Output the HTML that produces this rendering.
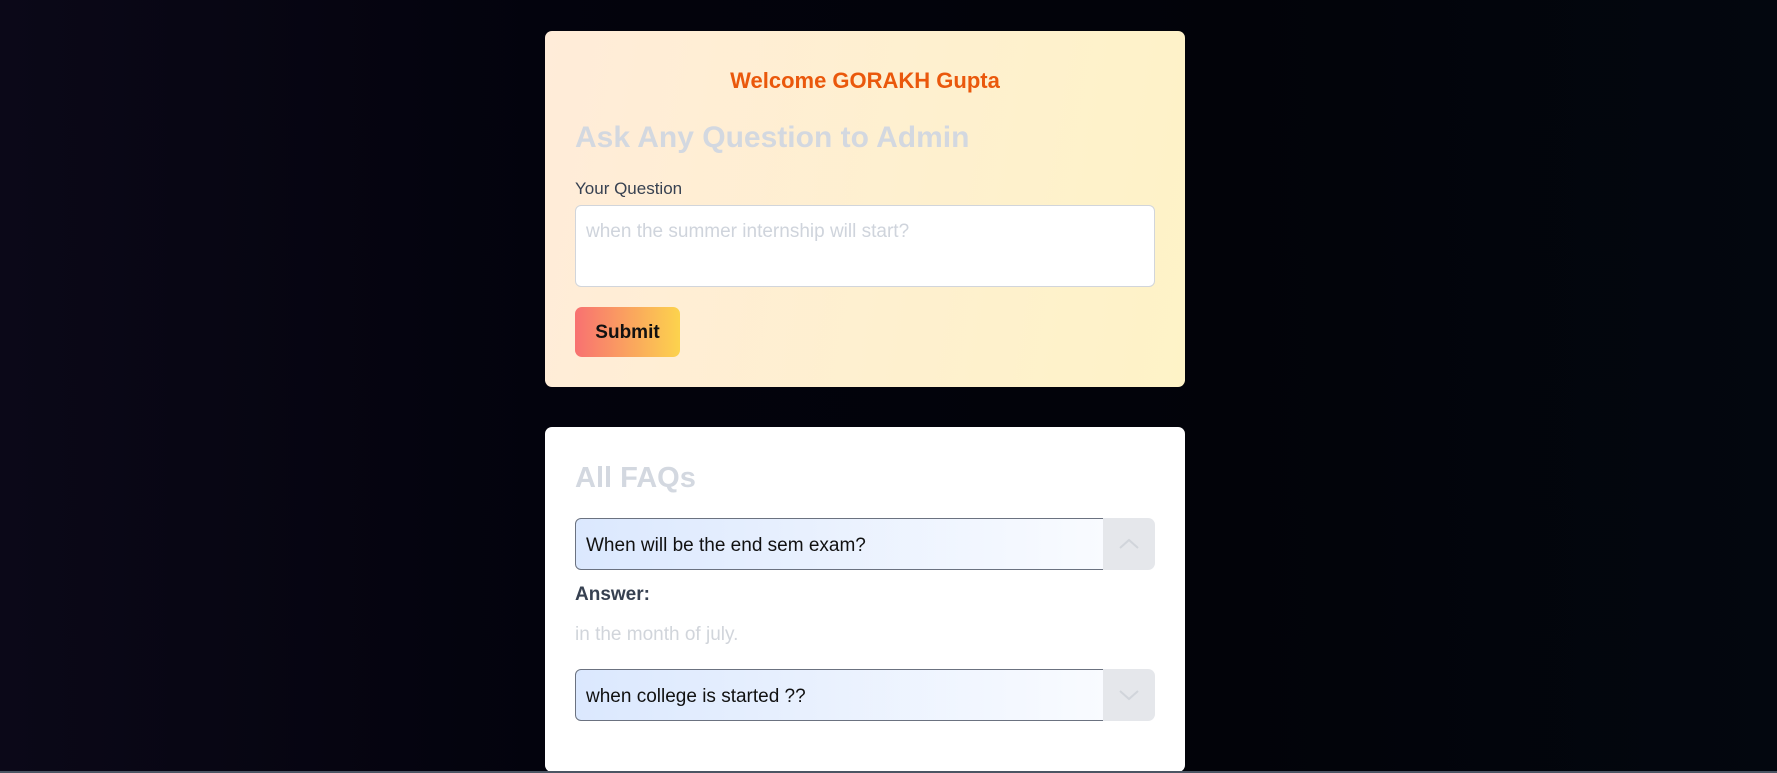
<!DOCTYPE html>
<html><head><style>
*{box-sizing:border-box;margin:0;padding:0}
body{width:1777px;height:773px;overflow:hidden;background:linear-gradient(90deg,#0b0818 0%,#03030d 30%,#020309 70%,#03070f 100%);font-family:"Liberation Sans",sans-serif;position:relative}
.card{position:absolute;left:545px;width:640px;border-radius:7px;padding:0 30px}
.c1{top:31px;height:356px;background:linear-gradient(100deg,#ffecd9,#fef3c7)}
.c2{top:427px;height:345px;background:#fff}
.w{position:absolute;top:37px;left:0;right:0;text-align:center;color:#ea580c;font-weight:bold;font-size:22px}
h2{position:absolute;left:30px;color:#d3d8e0;font-size:30px;font-weight:bold}
.lbl{position:absolute;left:30px;top:148px;font-size:17px;color:#374151}
.ta{position:absolute;left:30px;top:174px;width:580px;height:82px;background:#fff;border:1px solid #d1d5db;border-radius:6px;padding:15px 10px;color:#cfd4dc;font-size:19px}
.sub{position:absolute;left:30px;top:276px;width:105px;height:50px;border-radius:7px;background:linear-gradient(90deg,#f87171,#fcd34d);font-size:19px;color:#111;font-weight:600;text-align:center;line-height:52px}
.q{position:absolute;left:30px;width:580px;height:52px}
.q .t{position:absolute;left:0;top:0;width:530px;height:52px;border:1px solid #6b7280;border-radius:6px 0 0 6px;background:linear-gradient(90deg,#dbe8fe,#f9fbff);font-size:19px;color:#111;padding-left:10px;line-height:53px}
.q .b{position:absolute;right:0;top:0;width:52px;height:52px;background:#e5e7eb;border-radius:0 7px 7px 0}
.ans{position:absolute;left:30px;top:157px;font-size:19px;font-weight:bold;color:#374151}
.at{position:absolute;left:30px;top:197px;font-size:19px;color:#d1d5db}
.line{position:absolute;left:0;right:0;top:771px;height:2px;background:#4b5563}
</style></head><body>
<div class="card c1">
<div class="w">Welcome GORAKH Gupta</div>
<h2 style="top:90px">Ask Any Question to Admin</h2>
<div class="lbl">Your Question</div>
<div class="ta">when the summer internship will start?</div>
<div class="sub">Submit</div>
</div>
<div class="card c2">
<h2 style="top:35px;font-size:29px">All FAQs</h2>
<div class="q" style="top:91px"><div class="t">When will be the end sem exam?</div><div class="b"><svg width="52" height="52"><path d="M17 30 L26 22 L35 30" fill="none" stroke="#d1d5db" stroke-width="2"/></svg></div></div>
<div class="ans">Answer:</div>
<div class="at">in the month of july.</div>
<div class="q" style="top:242px"><div class="t">when college is started ??</div><div class="b"><svg width="52" height="52"><path d="M17 22 L26 30 L35 22" fill="none" stroke="#d1d5db" stroke-width="2"/></svg></div></div>
</div>
<div class="line"></div>
</body></html>
